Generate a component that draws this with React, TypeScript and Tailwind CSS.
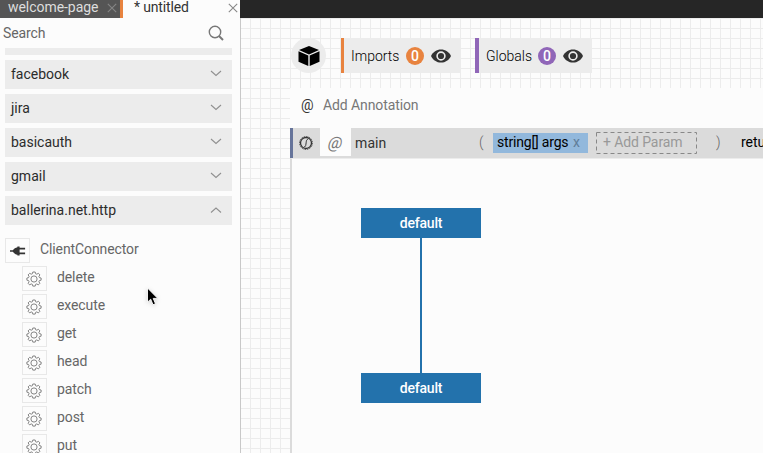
import type { ReactNode } from "react";

const packages = ["facebook", "jira", "basicauth", "gmail"];
const actions = ["delete", "execute", "get", "head", "patch", "post", "put"];

function Close({ className }: { className: string }) {
  return (
    <svg viewBox="0 0 10 10" className={`h-[10px] w-[10px] shrink-0 ${className}`} fill="none" stroke="currentColor" strokeWidth="1.1">
      <path d="M.8.8l8.4 8.4M9.2.8L.8 9.2" />
    </svg>
  );
}

function Chevron({ up = false }: { up?: boolean }) {
  return (
    <svg viewBox="0 0 12 8" className="h-2 w-3 shrink-0" fill="none" stroke="#909090" strokeWidth="1.1">
      <path d={up ? "M1 6.500l5-4.500 5 4.500" : "M1 1l5 4.500 5-4.500"} />
    </svg>
  );
}

function Gear() {
  return (
    <svg viewBox="0 0 16 16" className="-ml-px h-4 w-4 shrink-0" fill="none" stroke="#777" strokeWidth=".9" strokeLinejoin="round">
      <path d="M6.800 1h2.400l.4 1.700 1.200.5 1.600-.9 1.500 1.600-1 1.500.5 1.200 1.700.4v2.200l-1.700.4-.5 1.200 1 1.500-1.600 1.600-1.500-1-1.200.5-.4 1.700H6.800l-.4-1.700-1.200-.5-1.500 1-1.600-1.600 1-1.500-.5-1.200L.9 9.200V7l1.700-.4.5-1.200-1-1.500 1.600-1.600 1.500.9 1.200-.5z" />
      <circle cx="8" cy="8" r="3.100" />
    </svg>
  );
}

function Plug() {
  return (
    <svg viewBox="0 0 16 10" className="h-[10px] w-4 shrink-0" fill="#333">
      <path d="M0 4.300h2.800C4 2.700 5.500 1.500 7.400 1.200V.4h2.200v9.200H7.400V8.800C5.500 8.500 4 7.300 2.800 5.700H0zM9.500 1.800h5.600v1.700H9.500zM9.500 6.500h5.600v1.700H9.500z" />
    </svg>
  );
}

function Eye() {
  return (
    <svg viewBox="0 0 20 14" className="h-[14px] w-5 shrink-0">
      <path d="M0 7C2 2.800 5.600.4 10 .4S18 2.800 20 7c-2 4.200-5.600 6.600-10 6.600S2 11.200 0 7z" fill="#333" />
      <circle cx="10" cy="7" r="3.900" fill="none" stroke="#ececec" strokeWidth="1.600" />
    </svg>
  );
}

function PackageRow({ name, open = false }: { name: string; open?: boolean }) {
  return (
    <div className="flex h-[29px] shrink-0 items-center justify-between bg-[#ececec] pl-[6px] pr-[10px] text-[#2b2b2b]">
      <span className="pb-[2px]">{name}</span>
      <div className="pb-[2px]"><Chevron up={open} /></div>
    </div>
  );
}

function ToolBox({ children }: { children: ReactNode }) {
  return <div className="flex h-[25px] w-[25px] shrink-0 items-center justify-center border border-[#e8e8e8]">{children}</div>;
}

function Definition({ label, bar, badge, className }: { label: string; bar: string; badge: string; className: string }) {
  return (
    <div className={`flex h-[35px] items-center bg-[#ececec] ${bar} ${className}`}>
      <span className="text-black">{label}</span>
      <span className={`mr-[7px] flex h-[18px] w-[18px] shrink-0 items-center justify-center rounded-full text-[14px] font-medium text-white ${badge}`}>0</span>
      <Eye />
    </div>
  );
}

function Endpoint() {
  return (
    <div className="flex h-[30px] w-[120px] items-center justify-center bg-[#2372ac] font-medium text-white">
      <span className="tracking-[-0.2px]">default</span>
    </div>
  );
}

export default function App() {
  return (
    <div className="relative flex h-[453px] w-[763px] overflow-hidden bg-[#fcfcfc] font-['Roboto',sans-serif] text-[14px] leading-4">
      <aside className="flex w-[240px] shrink-0 flex-col">
        <div className="flex h-[18px] shrink-0">
          <div className="flex h-full w-[120px] items-start bg-[#555] pl-2 text-[#ddd]">
            <span className="-mt-px w-[99px] tracking-[-0.05px]">welcome-page</span>
            <Close className="mt-[3px] text-[#858585]" />
          </div>
          <div className="flex w-[120px] items-start border-l-[3px] border-[#e8833f] pl-[11px] text-[#333]">
            <span className="-mt-px w-[94px] tracking-[-0.15px]">* untitled</span>
            <Close className="mt-[3px] text-[#888]" />
          </div>
        </div>
        <div className="flex h-[30px] shrink-0 items-center justify-between pl-[3px] pr-[16px] text-[#666]">
          <span className="tracking-[-0.1px]">Search</span>
          <svg viewBox="0 0 16 16" className="h-4 w-4" fill="none" stroke="#777" strokeWidth="1.4">
            <circle cx="7" cy="7" r="5.700" />
            <path d="M11 11l4 4" strokeWidth="2" />
          </svg>
        </div>
        <div className="flex flex-col gap-[5px] pl-[5px] pr-[8px]">
          <div className="h-[7px] shrink-0 bg-[#ececec]" />
          {packages.map((name) => <PackageRow key={name} name={name} />)}
          <PackageRow name="ballerina.net.http" open />
        </div>
        <div className="mt-[13px] flex flex-col gap-[3px] pl-[5px] text-[#666]">
          <div className="flex gap-[10px]">
            <ToolBox><Plug /></ToolBox>
            <span className="mt-[3px] tracking-[-0.1px]">ClientConnector</span>
          </div>
          {actions.map((name) => (
            <div key={name} className="flex gap-[10px] pl-[17px]">
              <ToolBox><Gear /></ToolBox>
              <span className="mt-[3px] tracking-[-0.1px]">{name}</span>
            </div>
          ))}
        </div>
      </aside>

      <main className="flex min-w-0 flex-1 flex-col">
        <div className="h-[18px] shrink-0 bg-[#262626]" />
        <div className="flex min-h-0 flex-1 flex-col border-l border-[#c8c8c8] bg-[linear-gradient(to_right,#ececec_1px,transparent_1px),linear-gradient(to_bottom,#ececec_1px,transparent_1px)] bg-[length:10px_10px] bg-[position:9px_0px]">
          <div className="flex h-[70px] shrink-0 items-start pl-[50px] pt-5">
            <div className="flex h-[35px] w-[35px] items-center justify-center rounded-full bg-[#ececec]">
              <svg viewBox="0 0 22 22" className="h-[22px] w-[22px]">
                <path d="M11 1l10 4-10 4.500L1 5zM.5 6.300l9.800 4.300V21L.5 16.800zM21.500 6.300l-9.800 4.300V21l9.800-4.200z" />
              </svg>
            </div>
            <Definition label="Imports" bar="border-l-[3px] border-[#e8833f]" badge="ml-[7px] bg-[#e8833f]" className="ml-[15px] w-[120px] pl-[7px] font-light [&>span:first-child]:w-[48px]" />
            <Definition label="Globals" bar="border-l-[4px] border-[#9066b8]" badge="ml-[6px] bg-[#9066b8]" className="ml-[14px] w-[117px] pl-[7px] font-light [&>span:first-child]:w-[46px]" />
          </div>
          <section className="ml-[49px] flex min-h-0 flex-1 flex-col bg-[#fcfcfc]">
            <div className="flex h-10 shrink-0 items-center pb-[6px] pl-[11px]">
              <span className="w-[22px] text-[#333]">@</span>
              <span className="tracking-[-0.1px] text-[#777]">Add Annotation</span>
            </div>
            <div className="flex h-[30px] shrink-0 items-center overflow-hidden whitespace-nowrap border-l-[3px] border-[#66749a] bg-[#dbdbdb]">
              <div className="flex w-[26px] shrink-0 justify-center">
                <svg viewBox="0 0 16 16" className="h-4 w-4 shrink-0" fill="none" stroke="#333">
                  <circle cx="8" cy="8" r="5.500" strokeWidth="1.300" />
                  <circle cx="8" cy="8" r="6.500" strokeWidth=".8" strokeDasharray="1.500 1" />
                  <path d="M10 4.500c-2-.2-1.500 2-2.300 6-.2 1-.6 1.300-1.500 1" />
                </svg>
              </div>
              <div className="ml-px flex h-7 w-[31px] shrink-0 items-center justify-center self-start bg-[#fcfcfc] pt-[2px] text-[16px] text-[#777]">
                <span className="inline-block -skew-x-12">@</span>
              </div>
              <span className="ml-1 w-[124px] shrink-0 tracking-[0.1px] text-[#333]">main</span>
              <span className="w-[14px] shrink-0 pb-[2px] font-light text-[#666]">(</span>
              <div className="flex h-5 w-[95px] shrink-0 items-center bg-[#92b8dc] pb-[2px] pl-1 text-black">
                <span className="w-[76px] tracking-[-0.18px]">string[] args</span>
                <span className="text-[#607d99]">x</span>
              </div>
              <div className="relative ml-2 flex h-[22px] w-[102px] shrink-0 items-center pb-[2px] pl-[7px] text-[#999]">
                <svg viewBox="0 0 102 22" className="absolute inset-0 h-[22px] w-[102px]" fill="none" stroke="#888">
                  <rect x=".5" y=".5" width="100" height="21" strokeDasharray="4 3" />
                </svg>
                <span className="tracking-[-0.1px]">+ Add Param</span>
              </div>
              <span className="ml-[18px] w-[25px] shrink-0 pb-[2px] font-light text-[#666]">)</span>
              <span className="pb-[2px] text-black">returns</span>
            </div>
            <div className="flex min-h-0 flex-1 flex-col border-l-2 border-t border-l-[#dbdbdb] border-t-[#ececec] pl-[69px] pt-[49px]">
              <Endpoint />
              <div className="ml-[59px] h-[135px] w-[2px] bg-[#2372ac]" />
              <Endpoint />
            </div>
          </section>
        </div>
      </main>

      <svg viewBox="0 0 14 20" className="absolute left-[146px] top-[287px] h-5 w-[14px] drop-shadow-sm">
        <path d="M1.500 1v14.200l3.200-3 2.300 5.500 2.500-1-2.300-5.300h4.600z" fill="#000" stroke="#fff" strokeWidth=".9" />
      </svg>
    </div>
  );
}
